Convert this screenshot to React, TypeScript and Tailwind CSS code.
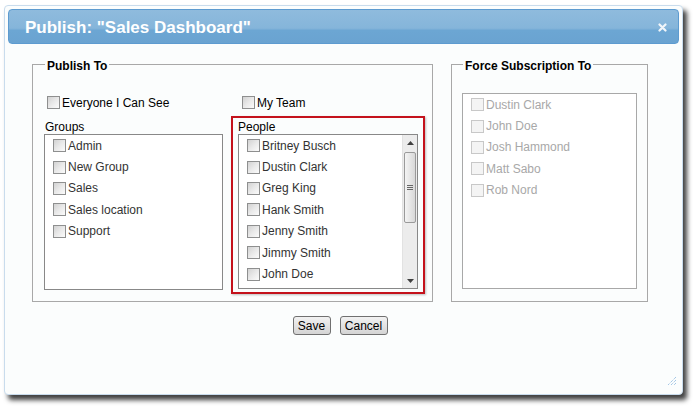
import React from 'react';

const groups = ['Admin', 'New Group', 'Sales', 'Sales location', 'Support'];
const people = ['Britney Busch', 'Dustin Clark', 'Greg King', 'Hank Smith', 'Jenny Smith', 'Jimmy Smith', 'John Doe'];
const forced = ['Dustin Clark', 'John Doe', 'Josh Hammond', 'Matt Sabo', 'Rob Nord'];

function Box({ disabled }: { disabled?: boolean }) {
  return (
    <span
      className={
        disabled
          ? 'w-[13px] h-[13px] shrink-0 border border-[#c8c8c8] bg-[#f4f4f4]'
          : 'w-[13px] h-[13px] shrink-0 border border-[#8e8f8f] bg-gradient-to-br from-[#d2d2d2] via-[#e9e9e9] to-[#fbfbfb]'
      }
    />
  );
}

function Item({ label, disabled }: { label: string; disabled?: boolean }) {
  return (
    <div className="h-[21.4px] flex items-center gap-[2px]">
      <Box disabled={disabled} />
      <span className={disabled ? 'text-[#a8a8a8]' : 'text-[#333]'}>{label}</span>
    </div>
  );
}

function Scrollbar() {
  return (
    <div className="w-[15px] h-full flex flex-col bg-[#ececec] border-l border-[#e2e2e2]">
      <div className="h-[15px] flex items-center justify-center">
        <svg width="7" height="4" viewBox="0 0 7 4"><path d="M0 4 L3.5 0 L7 4 Z" fill="#404040" /></svg>
      </div>
      <div className="mt-[2px] h-[71px] mx-[1px] rounded-[2px] border border-[#9a9a9a] bg-gradient-to-r from-[#f4f4f4] to-[#d8d8d8] flex flex-col items-center justify-center gap-[1px]">
        <div className="w-[6px] h-px bg-[#666]" />
        <div className="w-[6px] h-px bg-[#666]" />
        <div className="w-[6px] h-px bg-[#666]" />
      </div>
      <div className="flex-1" />
      <div className="h-[15px] flex items-center justify-center">
        <svg width="7" height="4" viewBox="0 0 7 4"><path d="M0 0 L3.5 4 L7 0 Z" fill="#404040" /></svg>
      </div>
    </div>
  );
}

export default function App() {
  return (
    <div className="w-[700px] h-[406px] bg-white overflow-hidden" style={{ fontFamily: '"Liberation Sans", Arial, sans-serif' }}>
      <div className="ml-[4px] mt-[5px] w-[679px] h-[390px] border border-[#c9dced] rounded-[4px] bg-[#fbfdfd] p-[3px] flex flex-col shadow-[4px_5px_5px_rgba(0,0,0,0.75)] relative">
        <div className="h-[35px] shrink-0 rounded-[4px] border border-[#5d9bd0] bg-[linear-gradient(180deg,#8fbbdd_0%,#85b5da_55%,#6ca6d3_62%,#6aa3d1_100%)] flex items-center justify-between pl-[16px] pr-[11px]">
          <span className="text-white font-bold text-[17px] mt-[2px]">
            Publish: "Sales Dashboard"
          </span>
          <svg width="9" height="9" viewBox="0 0 9 9" className="mt-[2px]">
            <path d="M1.5 1.5 L7.5 7.5 M7.5 1.5 L1.5 7.5" stroke="#f2f6fa" strokeWidth="2.2" strokeLinecap="round" />
          </svg>
        </div>

        <div className="flex items-start mt-[20px] ml-[24px] gap-[18px] text-[12px]">
          <div className="relative w-[401px] h-[238px] border border-[#a8a8a8] pl-[11px] pt-[31px]">
            <span className="absolute -top-[8px] left-[12px] bg-[#fbfdfd] px-[2px] font-bold text-[12px] text-black">Publish To</span>
            <div className="flex items-start gap-[8px]">
              <div className="w-[179px] flex flex-col">
                <div className="h-[13px] flex items-center gap-[2px] ml-[3px]">
                  <Box />
                  <span className="text-black">Everyone I Can See</span>
                </div>
                <div className="mt-[11px] h-[14px] leading-[14px] ml-[1px] text-black">Groups</div>
                <div className="h-[156px] border border-[#888] bg-white pl-[8px]">
                  {groups.map((g) => (
                    <Item key={g} label={g} />
                  ))}
                </div>
              </div>
              <div className="w-[194px] flex flex-col">
                <div className="h-[13px] flex items-center gap-[2px] ml-[11px]">
                  <Box />
                  <span className="text-black">My Team</span>
                </div>
                <div className="mt-[7px] h-[178px] border-2 border-[#c4121c] shadow-[1px_1px_2px_rgba(0,0,0,0.25)] pl-[5px] pt-[2px]">
                  <div className="h-[14px] leading-[14px] text-black">People</div>
                  <div className="w-[180px] h-[155px] border border-[#888] bg-white flex">
                    <div className="flex-1 pl-[8px] overflow-hidden">
                      {people.map((p) => (
                        <Item key={p} label={p} />
                      ))}
                    </div>
                    <Scrollbar />
                  </div>
                </div>
              </div>
            </div>
          </div>

          <div className="relative w-[197px] h-[238px] border border-[#a8a8a8] pl-[10px] pt-[28px]">
            <span className="absolute -top-[8px] left-[11px] bg-[#fbfdfd] px-[2px] font-bold text-[12px] text-black">Force Subscription To</span>
            <div className="w-[175px] h-[196px] border border-[#a8a8a8] bg-white pl-[8px]">
              {forced.map((f) => (
                <Item key={f} label={f} disabled />
              ))}
            </div>
          </div>
        </div>

        <div className="flex justify-center gap-[9px] mt-[14px] ml-[-7px] text-[12px]">
          <button className="w-[38px] h-[19px] rounded-[3px] border border-[#707070] bg-gradient-to-b from-[#f2f2f2] to-[#d4d4d4] text-black leading-none">Save</button>
          <button className="w-[48px] h-[19px] rounded-[3px] border border-[#707070] bg-gradient-to-b from-[#f2f2f2] to-[#d4d4d4] text-black leading-none">Cancel</button>
        </div>

        <svg width="10" height="10" viewBox="0 0 10 10" className="absolute right-[5px] bottom-[8px]">
          <path d="M9 1 L1 9 M9 4 L4 9 M9 7 L7 9" stroke="#7fb0dc" strokeWidth="1" strokeDasharray="1 1" />
        </svg>
      </div>
    </div>
  );
}
